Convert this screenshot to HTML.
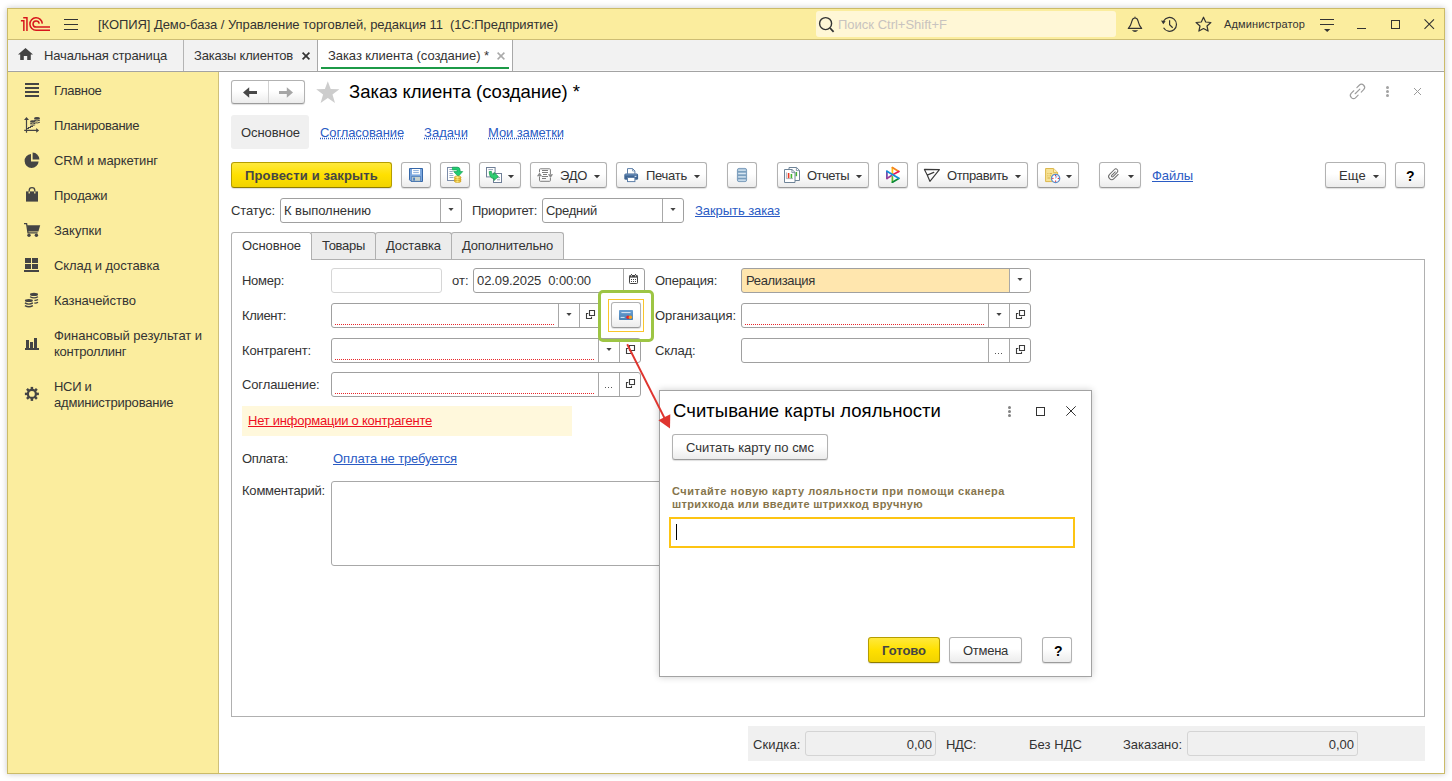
<!DOCTYPE html>
<html lang="ru">
<head>
<meta charset="utf-8">
<title>Заказ клиента (создание)</title>
<style>
*{box-sizing:border-box;margin:0;padding:0}
html,body{width:1452px;height:781px;overflow:hidden;background:#fff}
body{font-family:"Liberation Sans",sans-serif;font-size:13px;color:#333;position:relative}
.abs{position:absolute}
svg{overflow:visible}
.t{position:absolute;white-space:pre;line-height:16px;height:16px}
.btn{position:absolute;border:1px solid #b2b2b2;border-bottom-color:#9b9b9b;border-radius:3px;background:linear-gradient(#ffffff 0%,#ffffff 45%,#ececec 100%);box-shadow:0 1px 1px rgba(0,0,0,.13)}
.ybtn{position:absolute;border:1px solid #b59d00;border-bottom-color:#8f7c00;border-radius:3px;background:linear-gradient(#ffe93c 0%,#ffe000 50%,#f1d300 100%);box-shadow:0 1px 1px rgba(0,0,0,.13)}
.inp{position:absolute;border:1px solid #a0a0a0;border-radius:3px;background:#fff}
.lnk{color:#2a5bc4;text-decoration:underline}
.dlnk{color:#2a5bc4;text-decoration:underline dotted}
.vs{position:absolute;width:1px;background:#a8a8a8}
.rd{position:absolute;height:1px;background:repeating-linear-gradient(90deg,#e8262a 0,#e8262a 1px,transparent 1px,transparent 2px)}

</style>
</head>
<body>
<!-- window frame -->
<div class="abs" style="left:7px;top:8px;width:1438px;height:766px;border:1px solid #cbbb68;background:#fff;box-shadow:0 0 6px rgba(0,0,0,.22)"></div>
<div class="abs" style="left:8px;top:9px;width:1436px;height:30px;background:#fbed9e"></div>
<div class="abs" style="left:8px;top:39px;width:1436px;height:1px;background:#cdbd74"></div>
<div class="abs" style="left:8px;top:40px;width:1436px;height:30px;background:#f2f2f2"></div>
<div class="abs" style="left:8px;top:70px;width:1436px;height:1px;background:#f8f8f8"></div>
<div class="abs" style="left:8px;top:71px;width:1436px;height:1px;background:#a3a3a3"></div>
<div class="abs" style="left:8px;top:72px;width:210px;height:701px;background:#fbed9e"></div>
<div class="abs" style="left:218px;top:72px;width:1px;height:701px;background:#cfc07a"></div>
<!-- title bar -->
<svg class="abs" style="left:0px;top:0px" width="60" height="40" viewBox="0 0 60 40"><g fill="none" stroke="#d7151c" stroke-width="1.5" stroke-linejoin="miter">
<path d="M20.9 20.75 L23.85 20.75 L23.85 31"/>
<path d="M23.2 17.65 L26.95 17.65 L26.95 31"/>
<path d="M42.3 23.6 A6.2 6.2 0 1 0 36.15 30.2 L50 30.2"/>
<path d="M39.2 23.6 A3.1 3.1 0 1 0 36.15 27.1 L50 27.1"/>
</g></svg>
<div class="abs" style="left:64px;top:19px;width:14px;height:1px;background:#333"></div>
<div class="abs" style="left:64px;top:24px;width:14px;height:1px;background:#333"></div>
<div class="abs" style="left:64px;top:29px;width:14px;height:1px;background:#333"></div>
<div class="t" style="top:17px;left:98px;letter-spacing:-0.067px;">[КОПИЯ] Демо-база / Управление торговлей, редакция 11  (1С:Предприятие)</div>
<div class="abs" style="left:816px;top:11px;width:300px;height:26px;background:#fff7d6;border-radius:3px"></div>
<svg class="abs" style="left:818px;top:15.8px" width="18" height="18" viewBox="0 0 18 18"><circle cx="7.6" cy="7.6" r="6" fill="none" stroke="#333" stroke-width="1.4"/><path d="M12 12 L15.6 15.8" stroke="#333" stroke-width="1.8" fill="none"/></svg>
<div class="t" style="top:17px;left:838px;color:#c8c3bf;letter-spacing:0.000px;">Поиск Ctrl+Shift+F</div>
<svg class="abs" style="left:0px;top:0px" width="1" height="1" viewBox="0 0 1 1"><path d="M1128.3 28.4 C1131.4 25.6 1131.4 22.4 1131.9 21 C1132.4 18.8 1133.8 18 1135 18 C1136.2 18 1137.6 18.8 1138.1 21 C1138.6 22.4 1138.6 25.6 1141.7 28.4 Z M1135 17 L1135 18" fill="none" stroke="#333" stroke-width="1.15" stroke-linejoin="round" stroke-linecap="round"/><path d="M1131.8 30.2 L1138.2 30.2 Q1135 33.6 1131.8 30.2 Z" fill="#333"/></svg>
<svg class="abs" style="left:0px;top:0px" width="1" height="1" viewBox="0 0 1 1"><path d="M1163.6 20.95 A6.9 6.9 0 1 1 1163.56 27.75" fill="none" stroke="#333" stroke-width="1.2"/><path d="M1161 20.4 L1165.6 21.2 L1163.3 24.2 Z" fill="#333"/><path d="M1169.6 20.2 L1169.6 24.7 L1172.7 27.7" fill="none" stroke="#333" stroke-width="1.2"/></svg>
<svg class="abs" style="left:1194.6px;top:15.7px" width="17" height="16" viewBox="0 0 17 16"><path d="M8.5 1.2 L10.7 6 L15.9 6.5 L12 10 L13.1 15.1 L8.5 12.5 L3.9 15.1 L5 10 L1.1 6.5 L6.3 6 Z" fill="none" stroke="#333" stroke-width="1.2" stroke-linejoin="round"/></svg>
<div class="t" style="top:16px;left:1224px;font-size:11px;letter-spacing:0.125px;">Администратор</div>
<div class="abs" style="left:1320px;top:19px;width:14px;height:1px;background:#333"></div>
<div class="abs" style="left:1320px;top:24px;width:14px;height:1px;background:#333"></div>
<svg class="abs" style="left:1324px;top:29px" width="6" height="3" viewBox="0 0 6 3"><path d="M0 0 L6.4 0 L3.2 3.1 Z" fill="#333"/></svg>
<div class="abs" style="left:1357px;top:28px;width:9px;height:1px;background:#333"></div>
<div class="abs" style="left:1391px;top:20px;width:9px;height:9px;border:1px solid #333"></div>
<svg class="abs" style="left:1424px;top:19px" width="11" height="11" viewBox="0 0 11 11"><path d="M0.5 0.3 L10 9.8 M10 0.3 L0.5 9.8" stroke="#333" stroke-width="1.1" fill="none"/></svg>
<!-- app tabs -->
<svg class="abs" style="left:18px;top:48px" width="15" height="12" viewBox="0 0 15 12"><path d="M7.5 0 L15 6.6 L12.8 6.6 L12.8 12 L9.2 12 L9.2 8 L5.8 8 L5.8 12 L2.2 12 L2.2 6.6 L0 6.6 Z" fill="#444"/></svg>
<div class="t" style="top:48px;left:44px;letter-spacing:-0.155px;">Начальная страница</div>
<div class="abs" style="left:183px;top:40px;width:1px;height:31px;background:#b4b4b4"></div>
<div class="t" style="top:48px;left:194px;letter-spacing:-0.206px;">Заказы клиентов</div>
<svg class="abs" style="left:302px;top:52px" width="8" height="8" viewBox="0 0 8 8"><path d="M0.6 0.6 L7.4 7.4 M7.4 0.6 L0.6 7.4" stroke="#333" stroke-width="1.7" fill="none"/></svg>
<div class="abs" style="left:317px;top:40px;width:1px;height:31px;background:#a8a8a8"></div>
<div class="abs" style="left:318px;top:40px;width:194px;height:31px;background:#fff"></div>
<div class="t" style="top:48px;left:328px;letter-spacing:-0.064px;">Заказ клиента (создание) *</div>
<svg class="abs" style="left:497px;top:52px" width="8" height="8" viewBox="0 0 8 8"><path d="M0.6 0.6 L7.4 7.4 M7.4 0.6 L0.6 7.4" stroke="#aaa" stroke-width="1.5" fill="none"/></svg>
<div class="abs" style="left:321px;top:67px;width:188px;height:2px;background:#1c9a47"></div>
<div class="abs" style="left:512px;top:40px;width:1px;height:31px;background:#a8a8a8"></div>
<!-- sidebar -->
<div class="abs" style="left:25px;top:83px;width:14px;height:2px;background:#444"></div>
<div class="abs" style="left:25px;top:87px;width:14px;height:2px;background:#444"></div>
<div class="abs" style="left:25px;top:91px;width:14px;height:2px;background:#444"></div>
<div class="abs" style="left:25px;top:95px;width:14px;height:2px;background:#444"></div>
<div class="t" style="top:83px;left:54px;letter-spacing:-0.310px;">Главное</div>
<svg class="abs" style="left:0px;top:0px" width="1" height="1" viewBox="0 0 1 1"><g stroke="#444" fill="none" stroke-width="1.2"><path d="M26.5 119 L26.5 132.8 M24.2 130.4 L37 130.4"/><path d="M27 128.5 L28.5 128.5 L28.5 127.5 L30.5 127.5 L30.5 126.5 L33 126.5" stroke-width="1" shape-rendering="crispEdges"/></g>
<path d="M26.5 116.9 L24 119.9 L29 119.9 Z M39.1 130.4 L36.2 128.1 L36.2 132.7 Z" fill="#444"/>
<g fill="#444"><ellipse cx="37" cy="118.4" rx="3" ry="1.35"/><ellipse cx="32.8" cy="121.4" rx="2.8" ry="1.25"/></g>
<g fill="none" stroke="#444" stroke-width="1"><path d="M34.1 120.2 Q37 121.8 39.9 120.2"/><path d="M35.4 122.8 Q37.6 123.4 39.9 122.2"/><path d="M30.1 123.2 Q32.8 124.8 35.5 123.2"/><path d="M30.4 124.9 Q32.8 126 35.2 124.9" stroke-width="0.8"/></g></svg>
<div class="t" style="top:118px;left:54px;letter-spacing:-0.286px;">Планирование</div>
<svg class="abs" style="left:24px;top:152px" width="16" height="16" viewBox="0 0 16 16"><path d="M7 2 A7 7 0 1 0 14.6 9.4 L7 9.4 Z" fill="#444"/><path d="M8.6 0.6 A7 7 0 0 1 15.4 7.6 L8.6 7.6 Z" fill="#444"/></svg>
<div class="t" style="top:153px;left:54px;letter-spacing:-0.084px;">CRM и маркетинг</div>
<svg class="abs" style="left:25px;top:186px" width="14" height="16" viewBox="0 0 14 16"><path d="M1 5.4 L13 5.4 L13 15.6 L1 15.6 Z" fill="#444"/><path d="M4.2 7.6 L4.2 4.4 A2.8 2.8 0 0 1 9.8 4.4 L9.8 7.6" fill="none" stroke="#444" stroke-width="1.3"/><path d="M4.2 7.6 L4.2 5.4 M9.8 7.6 L9.8 5.4" stroke="#fbed9e" stroke-width="1.3"/><path d="M3.55 7.6 L3.55 5.4 M4.85 7.6 L4.85 5.4 M9.15 7.6 L9.15 5.4 M10.45 7.6 L10.45 5.4" stroke="#444" stroke-width="0" /></svg>
<div class="t" style="top:188px;left:54px;letter-spacing:-0.128px;">Продажи</div>
<svg class="abs" style="left:24px;top:223px" width="17" height="14" viewBox="0 0 17 14"><path d="M0 0.7 L2.6 0.7 L4 9.8 L13.6 9.8" fill="none" stroke="#444" stroke-width="1.3"/><path d="M3 2.2 L16.2 2.2 L14.4 8.6 L4 8.6 Z" fill="#444"/><circle cx="5" cy="12.2" r="1.7" fill="#444"/><circle cx="12.4" cy="12.2" r="1.7" fill="#444"/></svg>
<div class="t" style="top:223px;left:54px;letter-spacing:-0.001px;">Закупки</div>
<div class="abs" style="left:25px;top:258px;width:6px;height:5px;background:#444"></div>
<div class="abs" style="left:32px;top:258px;width:6px;height:5px;background:#444"></div>
<div class="abs" style="left:25px;top:264px;width:6px;height:5px;background:#444"></div>
<div class="abs" style="left:32px;top:264px;width:6px;height:5px;background:#444"></div>
<div class="abs" style="left:24px;top:270px;width:15px;height:2px;background:#444"></div>
<div class="t" style="top:258px;left:54px;letter-spacing:-0.067px;">Склад и доставка</div>
<svg class="abs" style="left:24px;top:292px" width="15" height="16" viewBox="0 0 15 16"><g fill="#444"><ellipse cx="10" cy="2.4" rx="4" ry="1.55"/><ellipse cx="4.9" cy="8.5" rx="4" ry="1.5"/></g>
<g fill="none" stroke="#444" stroke-width="1.3"><path d="M6 4.7 Q10 7 14 4.7"/><path d="M10.4 8.3 Q12.6 8.5 14 7.5"/><path d="M10.4 11 Q12.6 11.2 14 10.2"/><path d="M0.9 10.9 Q4.9 13.2 8.9 10.9"/><path d="M0.9 13.6 Q4.9 15.9 8.9 13.6"/></g></svg>
<div class="t" style="top:293px;left:54px;letter-spacing:-0.054px;">Казначейство</div>
<div class="abs" style="left:26px;top:340px;width:3px;height:9px;background:#444"></div>
<div class="abs" style="left:30px;top:342px;width:3px;height:7px;background:#444"></div>
<div class="abs" style="left:34px;top:338px;width:3px;height:11px;background:#444"></div>
<div class="abs" style="left:25px;top:348px;width:14px;height:1.5px;background:#444"></div>
<div class="t" style="top:328px;left:54px;letter-spacing:-0.039px;">Финансовый результат и</div>
<div class="t" style="top:344px;left:54px;letter-spacing:-0.221px;">контроллинг</div>
<svg class="abs" style="left:24px;top:386px" width="16" height="16" viewBox="0 0 16 16"><g transform="translate(7.9 7.9)"><circle r="4" fill="none" stroke="#444" stroke-width="2.2"/><g fill="#444"><rect x="-1.25" y="-7" width="2.5" height="3" transform="rotate(0)"/><rect x="-1.25" y="-7" width="2.5" height="3" transform="rotate(45)"/><rect x="-1.25" y="-7" width="2.5" height="3" transform="rotate(90)"/><rect x="-1.25" y="-7" width="2.5" height="3" transform="rotate(135)"/><rect x="-1.25" y="-7" width="2.5" height="3" transform="rotate(180)"/><rect x="-1.25" y="-7" width="2.5" height="3" transform="rotate(225)"/><rect x="-1.25" y="-7" width="2.5" height="3" transform="rotate(270)"/><rect x="-1.25" y="-7" width="2.5" height="3" transform="rotate(315)"/></g></g></svg>
<div class="t" style="top:379px;left:54px;letter-spacing:-0.300px;">НСИ и</div>
<div class="t" style="top:395px;left:54px;letter-spacing:-0.184px;">администрирование</div>
<!-- main form header -->
<div class="btn" style="left:231px;top:80px;width:74px;height:24px;"></div>
<div class="abs" style="left:268px;top:81px;width:1px;height:22px;background:#d2d2d2"></div>
<svg class="abs" style="left:243px;top:87px" width="14" height="11" viewBox="0 0 14 11"><path d="M0 5.5 L6.2 0.2 L6.2 3.9 L14 3.9 L14 7.1 L6.2 7.1 L6.2 10.8 Z" fill="#484848"/></svg>
<svg class="abs" style="left:279px;top:87px" width="14" height="11" viewBox="0 0 14 11"><path d="M14 5.5 L7.8 0.2 L7.8 3.9 L0 3.9 L0 7.1 L7.8 7.1 L7.8 10.8 Z" fill="#a6a6a6"/></svg>
<svg class="abs" style="left:315.6px;top:81px" width="24" height="22" viewBox="0 0 24 22"><path d="M11.8 0.2 L14.7 8 L23.4 8.3 L16.5 13.6 L19 21.9 L11.8 17 L4.6 21.9 L7.1 13.6 L0.2 8.3 L8.9 8 Z" fill="#cdcdcd"/></svg>
<div class="t" style="top:80px;left:349px;font-size:18.5px;line-height:24px;height:24px;color:#000;letter-spacing:-0.019px;">Заказ клиента (создание) *</div>
<svg class="abs" style="left:0px;top:0px" width="1" height="1" viewBox="0 0 1 1"><g transform="translate(1357.5 91.4) rotate(-45)" fill="none" stroke="#9c9c9c" stroke-width="1.15" stroke-linecap="round"><path d="M2.2 -3.1 L5.6 -3.1 A3.1 3.1 0 0 1 5.6 3.1 L2.2 3.1"/><path d="M-2.2 3.1 L-5.6 3.1 A3.1 3.1 0 0 1 -5.6 -3.1 L-2.2 -3.1"/><path d="M-3.3 0 L3.3 0"/></g></svg>
<div class="abs" style="left:1386px;top:86px;width:3px;height:3px;background:#a2a2a2;border-radius:50%"></div>
<div class="abs" style="left:1386px;top:90px;width:3px;height:3px;background:#a2a2a2;border-radius:50%"></div>
<div class="abs" style="left:1386px;top:94px;width:3px;height:3px;background:#a2a2a2;border-radius:50%"></div>
<svg class="abs" style="left:1414px;top:88px" width="7" height="7" viewBox="0 0 7 7"><path d="M0 0 L7 7 M7 0 L0 7" stroke="#9a9a9a" stroke-width="1" fill="none"/></svg>
<div class="abs" style="left:231px;top:115px;width:78px;height:34px;background:#f0f0f0;border-radius:3px"></div>
<div class="t" style="top:125px;left:241px;letter-spacing:-0.072px;">Основное</div>
<div class="t dlnk" style="top:125px;left:320px;letter-spacing:-0.120px;">Согласование</div>
<div class="t dlnk" style="top:125px;left:424px;letter-spacing:0.057px;">Задачи</div>
<div class="t dlnk" style="top:125px;left:488px;letter-spacing:-0.084px;">Мои заметки</div>
<!-- toolbar -->
<div class="ybtn" style="left:231px;top:162px;width:161px;height:26px;"></div>
<div class="t" style="top:168px;left:245px;font-weight:700;color:#454545;letter-spacing:0.148px;">Провести и закрыть</div>
<div class="btn" style="left:401px;top:162px;width:30px;height:26px;"></div>
<svg class="abs" style="left:409px;top:168px" width="14" height="14" viewBox="0 0 14 14"><path d="M0.5 0.5 L13.5 0.5 L13.5 13.5 L2.2 13.5 L0.5 11.8 Z" fill="#7ba7de" stroke="#3567a8" stroke-width="1"/><rect x="3" y="1" width="8" height="5.4" fill="#fff"/><path d="M4.2 2.6 L9.8 2.6 M4.2 4.6 L9.8 4.6" stroke="#7fa6d6" stroke-width="0.9"/><rect x="2.8" y="8.6" width="8.6" height="4.6" fill="#c8d2cc" stroke="#4a79b3" stroke-width="0.7"/><rect x="4.2" y="9.6" width="1.7" height="3" fill="#3f78c0"/></svg>
<div class="btn" style="left:440px;top:162px;width:30px;height:26px;"></div>
<svg class="abs" style="left:0px;top:0px" width="1" height="1" viewBox="0 0 1 1"><defs><linearGradient id="gc" x1="0" y1="0" x2="1" y2="0"><stop offset="0" stop-color="#e6b21c"/><stop offset="0.45" stop-color="#fff38a"/><stop offset="1" stop-color="#e2ac18"/></linearGradient></defs>
<rect x="447.5" y="167.5" width="10.6" height="13" fill="#fff" stroke="#7c8ca8" stroke-width="1"/><path d="M449.4 169.5 H452.4 M449.4 171.5 H452.8 M449.4 173.5 H452.8 M449.4 175.5 H453.4 M449.4 177.5 H453.4" stroke="#8fa2c0" stroke-width="0.9"/>
<path d="M452.4 167.2 H457.4 Q460.1 167.2 460.1 170 V171.6 H462.7 L458.2 176.5 L453.7 171.6 H457.1 V170.5 Q457.1 169.9 456.5 169.9 H452.4 Z" fill="#22cc72" stroke="#10a050" stroke-width="0.7" stroke-linejoin="round"/>
<g fill="url(#gc)" stroke="#c9981a" stroke-width="0.6"><ellipse cx="457.7" cy="181" rx="3.4" ry="1.5"/><ellipse cx="457.7" cy="179.2" rx="3.4" ry="1.5"/><ellipse cx="457.7" cy="177.4" rx="3.4" ry="1.5"/></g></svg>
<div class="btn" style="left:479px;top:162px;width:42px;height:26px;"></div>
<svg class="abs" style="left:486px;top:167px" width="16" height="16" viewBox="0 0 16 16"><rect x="0.5" y="0.5" width="8.6" height="9.4" fill="#fff" stroke="#6f7f97" stroke-width="1"/><path d="M2.4 2.6 L7 2.6" stroke="#8a9ab0" stroke-width="0.9"/>
<rect x="7.5" y="6.5" width="8" height="9" fill="#fff" stroke="#6f7f97" stroke-width="1"/><path d="M11 10.6 L14 10.6 M11 12.8 L14 12.8" stroke="#8a9ab0" stroke-width="0.9"/>
<path d="M3.2 4.6 L5.4 4.4 Q5.2 7.6 8 7.4 L8 5.4 L12.4 9.6 L8 13.4 L8 11.4 Q3.4 11.8 3.2 4.6 Z" fill="#2ecc71" stroke="#1e9e50" stroke-width="0.8"/></svg>
<svg class="abs" style="left:507px;top:175px" width="8" height="4" viewBox="0 0 8 4"><path d="M0.9 0 L7.1 0 L4 3.3 Z" fill="#3a3a3a"/></svg>
<div class="btn" style="left:530px;top:162px;width:77px;height:26px;"></div>
<svg class="abs" style="left:0px;top:0px" width="1" height="1" viewBox="0 0 1 1"><g fill="none" stroke="#7d7d7d" stroke-width="1"><path d="M539.5 172.2 V169.6 Q539.5 168.8 540.3 168.8 H549.6 Q550.4 168.8 550.4 169.6 V174.2"/><path d="M550.4 178 V180.5 Q550.4 181.3 549.6 181.3 H540.3 Q539.5 181.3 539.5 180.5 V176.4"/><path d="M542 170.5 H548 M542 172.5 H548 M543 174.5 H547 M542 176.5 H548 M542 178.5 H546" stroke-width="1" shape-rendering="crispEdges"/></g><path d="M539.5 172.4 L536.9 176.2 L542.1 176.2 Z M550.5 178 L547.9 174.2 L553.1 174.2 Z" fill="#8a8a8a"/></svg>
<div class="t" style="top:168px;left:560px;letter-spacing:-0.276px;">ЭДО</div>
<svg class="abs" style="left:593px;top:175px" width="8" height="4" viewBox="0 0 8 4"><path d="M0.9 0 L7.1 0 L4 3.3 Z" fill="#3a3a3a"/></svg>
<div class="btn" style="left:616px;top:162px;width:91px;height:26px;"></div>
<svg class="abs" style="left:624px;top:168px" width="15" height="14" viewBox="0 0 15 14"><path d="M3.5 5.8 V0.6 H8.6 L10.9 2.9 V5.8" fill="#fff" stroke="#5d7fa8" stroke-width="1"/><path d="M8.5 0.7 V3 H10.8" fill="none" stroke="#5d7fa8" stroke-width="0.7"/><rect x="0.3" y="5.6" width="13.8" height="6.2" rx="1.5" fill="#3f6593"/><rect x="1.2" y="6.3" width="12" height="1.1" fill="#6f93bd"/><rect x="3.5" y="9.5" width="7.4" height="4.1" fill="#fff" stroke="#5d7fa8" stroke-width="1"/><rect x="10.6" y="7.9" width="1.8" height="1" fill="#dbe8f8"/></svg>
<div class="t" style="top:168px;left:646px;letter-spacing:-0.266px;">Печать</div>
<svg class="abs" style="left:693px;top:175px" width="8" height="4" viewBox="0 0 8 4"><path d="M0.9 0 L7.1 0 L4 3.3 Z" fill="#3a3a3a"/></svg>
<div class="btn" style="left:727px;top:162px;width:30px;height:26px;"></div>
<svg class="abs" style="left:737px;top:168px" width="10" height="14" viewBox="0 0 10 14"><rect x="0.4" y="0.4" width="9.2" height="13.2" rx="1.6" fill="#8eb0cd" stroke="#6b90b2" stroke-width="0.8"/><path d="M1.2 2.1 L8.8 2.1 M1.2 5.5 L8.8 5.5 M1.2 8.9 L8.8 8.9 M1.2 12.2 L8.8 12.2" stroke="#d9e7f2" stroke-width="1.3"/><path d="M0.8 3.8 L9.2 3.8 M0.8 7.2 L9.2 7.2 M0.8 10.6 L9.2 10.6" stroke="#6b90b2" stroke-width="0.7"/></svg>
<div class="btn" style="left:777px;top:162px;width:92px;height:26px;"></div>
<svg class="abs" style="left:784px;top:167px" width="16" height="16" viewBox="0 0 16 16"><path d="M5 0.5 L12.6 0.5 L15.5 3.4 L15.5 13.5 L5 13.5 Z" fill="#fff" stroke="#6f8498" stroke-width="1"/><path d="M12.4 0.6 L12.4 3.6 L15.4 3.6" fill="none" stroke="#6f8498" stroke-width="0.8"/><rect x="11.6" y="5" width="1.5" height="4.2" fill="#45b535"/>
<path d="M0.5 2.5 L8 2.5 L11 5.4 L11 15.5 L0.5 15.5 Z" fill="#fff" stroke="#6f8498" stroke-width="1"/><path d="M7.9 2.6 L7.9 5.6 L10.9 5.6" fill="none" stroke="#6f8498" stroke-width="0.8"/>
<path d="M2.4 5.4 L2.4 11.6 L9 11.6" fill="none" stroke="#8e99a4" stroke-width="0.7"/><rect x="3.8" y="6" width="1.6" height="5.2" fill="#ea3a24"/><rect x="6.6" y="7" width="1.6" height="4.2" fill="#45b535"/></svg>
<div class="t" style="top:168px;left:807px;letter-spacing:-0.490px;">Отчеты</div>
<svg class="abs" style="left:855px;top:175px" width="8" height="4" viewBox="0 0 8 4"><path d="M0.9 0 L7.1 0 L4 3.3 Z" fill="#3a3a3a"/></svg>
<div class="btn" style="left:878px;top:162px;width:30px;height:26px;"></div>
<svg class="abs" style="left:0px;top:0px" width="1" height="1" viewBox="0 0 1 1"><g fill="none" stroke-width="1.7" stroke-linecap="round" stroke-linejoin="round">
<path d="M892.4 167.6 L892.4 174" stroke="#ffc20e"/><path d="M892.4 167.6 L898.8 171.5" stroke="#f58220"/><path d="M898.8 171.5 L893.6 174.3" stroke="#e5195a"/>
<path d="M886.9 171.4 L886.9 178.4" stroke="#6a46a8"/><path d="M886.9 178.4 L891.6 175.6" stroke="#a23c96"/>
<path d="M892.4 176.8 L892.4 182.2" stroke="#5dbe2a"/><path d="M892.4 182.2 L898.8 178.4" stroke="#0b8a3a"/>
<path d="M886.9 171.2 L898.8 178.3" stroke="#0e8fd8"/></g></svg>
<div class="btn" style="left:917px;top:162px;width:111px;height:26px;"></div>
<svg class="abs" style="left:0px;top:0px" width="1" height="1" viewBox="0 0 1 1"><path d="M924.4 169.4 L939.4 169.6 L929.9 181.3 L927.2 175.1 Z M927.2 175.1 L933.8 172.4" fill="none" stroke="#3a3a3a" stroke-width="1.15" stroke-linejoin="round" stroke-linecap="round"/></svg>
<div class="t" style="top:168px;left:947px;letter-spacing:-0.385px;">Отправить</div>
<svg class="abs" style="left:1014px;top:175px" width="8" height="4" viewBox="0 0 8 4"><path d="M0.9 0 L7.1 0 L4 3.3 Z" fill="#3a3a3a"/></svg>
<div class="btn" style="left:1037px;top:162px;width:42px;height:26px;"></div>
<svg class="abs" style="left:1045px;top:168px" width="16" height="15" viewBox="0 0 16 15"><path d="M0.6 0.5 L8.6 0.5 L12.6 4.4 L12.6 13.6 L0.6 13.6 Z" fill="#f7e294" stroke="#dcb84c" stroke-width="1"/><path d="M8.5 0.6 L8.5 4.5 L12.5 4.5" fill="#fbeeb8" stroke="#dcb84c" stroke-width="0.8"/><path d="M2.4 5.6 L3.4 5.6 M4.6 5.6 L7 5.6 M2.4 7.8 L3.4 7.8 M4.6 7.8 L6 7.8 M2.4 10 L5 10" stroke="#d3ab3c" stroke-width="0.9"/>
<circle cx="10.6" cy="10.4" r="4.1" fill="#fff" stroke="#5b8dc9" stroke-width="1.3"/><g fill="#e8202a"><rect x="10.1" y="7" width="1" height="1.3"/><rect x="10.1" y="12.5" width="1" height="1.3"/><rect x="7.2" y="9.9" width="1.3" height="1"/><rect x="12.7" y="9.9" width="1.3" height="1"/></g><path d="M10.6 10.4 L12.2 8.2 L10.8 8.4 Z" fill="#8fa6e0" stroke="#8fa6e0" stroke-width="0.5"/></svg>
<svg class="abs" style="left:1065px;top:175px" width="8" height="4" viewBox="0 0 8 4"><path d="M0.9 0 L7.1 0 L4 3.3 Z" fill="#3a3a3a"/></svg>
<div class="btn" style="left:1099px;top:162px;width:42px;height:26px;"></div>
<svg class="abs" style="left:1107px;top:167px" width="15" height="15" viewBox="0 0 15 15"><g transform="translate(6.9 7.4) rotate(45)"><path d="M3.1 -3 L3.1 3 A3.1 3.1 0 0 1 -3.1 3 L-3.1 -3.8 A2 2 0 0 1 0.9 -3.8 L0.9 2.2 A0.9 0.9 0 0 1 -0.9 2.2 L-0.9 -2.8" fill="none" stroke="#6c6c6c" stroke-width="1" stroke-linecap="round"/></g></svg>
<svg class="abs" style="left:1127px;top:175px" width="8" height="4" viewBox="0 0 8 4"><path d="M0.9 0 L7.1 0 L4 3.3 Z" fill="#3a3a3a"/></svg>
<div class="t lnk" style="top:168px;left:1152px;letter-spacing:-0.062px;">Файлы</div>
<div class="btn" style="left:1325px;top:162px;width:61px;height:26px;"></div>
<div class="t" style="top:168px;left:1339px;letter-spacing:0.182px;">Еще</div>
<svg class="abs" style="left:1372px;top:175px" width="8" height="4" viewBox="0 0 8 4"><path d="M0.9 0 L7.1 0 L4 3.3 Z" fill="#3a3a3a"/></svg>
<div class="btn" style="left:1395px;top:162px;width:30px;height:26px;"></div>
<div class="t" style="top:168px;left:1406px;font-size:14px;font-weight:700;color:#000;">?</div>
<!-- status row -->
<div class="t" style="top:203px;left:231px;letter-spacing:-0.103px;">Статус:</div>
<div class="inp" style="left:280px;top:198px;width:182px;height:25px;"></div>
<div class="vs" style="left:440px;top:199px;width:1px;height:23px;"></div>
<svg class="abs" style="left:448px;top:208px" width="6" height="3" viewBox="0 0 6 3"><path d="M0.4 0 L5.6 0 L3 3 Z" fill="#444"/></svg>
<div class="t" style="top:203px;left:284px;letter-spacing:-0.051px;">К выполнению</div>
<div class="t" style="top:203px;left:472px;letter-spacing:-0.273px;">Приоритет:</div>
<div class="inp" style="left:542px;top:198px;width:142px;height:25px;"></div>
<div class="vs" style="left:662px;top:199px;width:1px;height:23px;"></div>
<svg class="abs" style="left:670px;top:208px" width="6" height="3" viewBox="0 0 6 3"><path d="M0.4 0 L5.6 0 L3 3 Z" fill="#444"/></svg>
<div class="t" style="top:203px;left:546px;letter-spacing:-0.266px;">Средний</div>
<div class="t lnk" style="top:203px;left:695px;letter-spacing:-0.069px;">Закрыть заказ</div>
<!-- form tabs + panel -->
<div class="abs" style="left:231px;top:259px;width:1194px;height:458px;border:1px solid #b0b0b0;background:#fff"></div>
<div class="abs" style="left:311px;top:232px;width:65px;height:27px;border:1px solid #b0b0b0;border-bottom:none;border-radius:3px 3px 0 0;background:#ececec;border-left:none;border-radius:0 3px 0 0"></div>
<div class="abs" style="left:375px;top:232px;width:77px;height:27px;border:1px solid #b0b0b0;border-bottom:none;border-radius:3px 3px 0 0;background:#ececec;border-radius:3px 3px 0 0"></div>
<div class="abs" style="left:451px;top:232px;width:113px;height:27px;border:1px solid #b0b0b0;border-bottom:none;border-radius:3px 3px 0 0;background:#ececec;border-radius:3px 3px 0 0"></div>
<div class="abs" style="left:231px;top:232px;width:81px;height:28px;border:1px solid #b0b0b0;border-bottom:none;border-radius:3px 3px 0 0;background:#fff"></div>
<div class="t" style="top:238px;left:242px;letter-spacing:-0.072px;">Основное</div>
<div class="t" style="top:238px;left:322px;letter-spacing:-0.289px;">Товары</div>
<div class="t" style="top:238px;left:386px;letter-spacing:-0.104px;">Доставка</div>
<div class="t" style="top:238px;left:462px;letter-spacing:-0.198px;">Дополнительно</div>
<!-- form fields -->
<div class="t" style="top:273px;left:242px;letter-spacing:-0.273px;">Номер:</div>
<div class="inp" style="left:331px;top:268px;width:111px;height:25px;border-color:#d6d6d6"></div>
<div class="t" style="top:273px;left:452px;">от:</div>
<div class="inp" style="left:473px;top:268px;width:172px;height:25px;"></div>
<div class="vs" style="left:623px;top:269px;width:1px;height:23px;"></div>
<div class="t" style="top:273px;left:477px;letter-spacing:-0.088px;">02.09.2025  0:00:00</div>
<svg class="abs" style="left:629px;top:274px" width="9" height="10" viewBox="0 0 9 10"><rect x="0.5" y="1.5" width="8" height="8" rx="0.8" fill="#fff" stroke="#444" stroke-width="1"/><rect x="0.5" y="1.5" width="8" height="2.1" fill="#444"/><rect x="2" y="0" width="1" height="1.4" fill="#444"/><rect x="6" y="0" width="1" height="1.4" fill="#444"/><rect x="2" y="1.3" width="1" height="1" fill="#fff"/><rect x="6" y="1.3" width="1" height="1" fill="#fff"/><g fill="#444"><rect x="2" y="5" width="1" height="1"/><rect x="4" y="5" width="1" height="1"/><rect x="6" y="5" width="1" height="1"/><rect x="2" y="7" width="1" height="1"/><rect x="4" y="7" width="1" height="1"/><rect x="6" y="7" width="1" height="1"/></g></svg>
<div class="t" style="top:273px;left:655px;letter-spacing:-0.245px;">Операция:</div>
<div class="inp" style="left:741px;top:268px;width:290px;height:25px;background:#ffe6ae"></div>
<div class="abs" style="left:1009px;top:269px;width:21px;height:23px;background:#fff;border-left:1px solid #a8a8a8;border-radius:0 2px 2px 0"></div>
<svg class="abs" style="left:1017px;top:278px" width="6" height="3" viewBox="0 0 6 3"><path d="M0.4 0 L5.6 0 L3 3 Z" fill="#444"/></svg>
<div class="t" style="top:273px;left:746px;letter-spacing:-0.336px;">Реализация</div>
<div class="t" style="top:308px;left:242px;letter-spacing:-0.344px;">Клиент:</div>
<div class="inp" style="left:331px;top:303px;width:270px;height:25px;"></div>
<div class="vs" style="left:558px;top:304px;width:1px;height:23px;"></div>
<div class="vs" style="left:579px;top:304px;width:1px;height:23px;"></div>
<svg class="abs" style="left:566px;top:313px" width="6" height="3" viewBox="0 0 6 3"><path d="M0.4 0 L5.6 0 L3 3 Z" fill="#444"/></svg>
<svg class="abs" style="left:586px;top:310px" width="9" height="9" viewBox="0 0 9 9"><g fill="none" stroke="#3c3c3c" stroke-width="1.1"><path d="M3.5 0.5 H8.5 V5.5 H3.5 Z"/><path d="M2.3 3.5 H0.5 V8.5 H5.5 V6.7"/></g></svg>
<div class="rd" style="left:335px;top:324px;width:219px;height:1px;"></div>
<div class="t" style="top:308px;left:655px;letter-spacing:-0.086px;">Организация:</div>
<div class="inp" style="left:741px;top:303px;width:290px;height:25px;"></div>
<div class="vs" style="left:988px;top:304px;width:1px;height:23px;"></div>
<div class="vs" style="left:1009px;top:304px;width:1px;height:23px;"></div>
<svg class="abs" style="left:996px;top:313px" width="6" height="3" viewBox="0 0 6 3"><path d="M0.4 0 L5.6 0 L3 3 Z" fill="#444"/></svg>
<svg class="abs" style="left:1016px;top:310px" width="9" height="9" viewBox="0 0 9 9"><g fill="none" stroke="#3c3c3c" stroke-width="1.1"><path d="M3.5 0.5 H8.5 V5.5 H3.5 Z"/><path d="M2.3 3.5 H0.5 V8.5 H5.5 V6.7"/></g></svg>
<div class="rd" style="left:745px;top:324px;width:240px;height:1px;"></div>
<div class="t" style="top:343px;left:242px;letter-spacing:-0.166px;">Контрагент:</div>
<div class="inp" style="left:331px;top:338px;width:310px;height:25px;"></div>
<div class="vs" style="left:598px;top:339px;width:1px;height:23px;"></div>
<div class="vs" style="left:619px;top:339px;width:1px;height:23px;"></div>
<svg class="abs" style="left:606px;top:348px" width="6" height="3" viewBox="0 0 6 3"><path d="M0.4 0 L5.6 0 L3 3 Z" fill="#444"/></svg>
<svg class="abs" style="left:626px;top:345px" width="9" height="9" viewBox="0 0 9 9"><g fill="none" stroke="#3c3c3c" stroke-width="1.1"><path d="M3.5 0.5 H8.5 V5.5 H3.5 Z"/><path d="M2.3 3.5 H0.5 V8.5 H5.5 V6.7"/></g></svg>
<div class="rd" style="left:335px;top:359px;width:259px;height:1px;"></div>
<div class="t" style="top:343px;left:655px;letter-spacing:-0.122px;">Склад:</div>
<div class="inp" style="left:741px;top:338px;width:290px;height:25px;"></div>
<div class="vs" style="left:988px;top:339px;width:1px;height:23px;"></div>
<div class="vs" style="left:1009px;top:339px;width:1px;height:23px;"></div>
<div class="abs" style="left:995.0px;top:353px;width:1px;height:1px;background:#555"></div>
<div class="abs" style="left:998.0px;top:353px;width:1px;height:1px;background:#555"></div>
<div class="abs" style="left:1001.0px;top:353px;width:1px;height:1px;background:#555"></div>
<svg class="abs" style="left:1016px;top:345px" width="9" height="9" viewBox="0 0 9 9"><g fill="none" stroke="#3c3c3c" stroke-width="1.1"><path d="M3.5 0.5 H8.5 V5.5 H3.5 Z"/><path d="M2.3 3.5 H0.5 V8.5 H5.5 V6.7"/></g></svg>
<div class="t" style="top:377px;left:242px;letter-spacing:-0.122px;">Соглашение:</div>
<div class="inp" style="left:331px;top:372px;width:310px;height:25px;"></div>
<div class="vs" style="left:598px;top:373px;width:1px;height:23px;"></div>
<div class="vs" style="left:619px;top:373px;width:1px;height:23px;"></div>
<div class="abs" style="left:605.0px;top:387px;width:1px;height:1px;background:#555"></div>
<div class="abs" style="left:608.0px;top:387px;width:1px;height:1px;background:#555"></div>
<div class="abs" style="left:611.0px;top:387px;width:1px;height:1px;background:#555"></div>
<svg class="abs" style="left:626px;top:379px" width="9" height="9" viewBox="0 0 9 9"><g fill="none" stroke="#3c3c3c" stroke-width="1.1"><path d="M3.5 0.5 H8.5 V5.5 H3.5 Z"/><path d="M2.3 3.5 H0.5 V8.5 H5.5 V6.7"/></g></svg>
<div class="rd" style="left:335px;top:393px;width:259px;height:1px;"></div>
<div class="abs" style="left:242px;top:406px;width:330px;height:30px;background:#fff8dc"></div>
<div class="t" style="top:413px;left:248px;color:#ee0f1e;letter-spacing:-0.232px;text-decoration:underline;">Нет информации о контрагенте</div>
<div class="t" style="top:451px;left:242px;letter-spacing:-0.335px;">Оплата:</div>
<div class="t lnk" style="top:451px;left:333px;letter-spacing:-0.120px;">Оплата не требуется</div>
<div class="t" style="top:483px;left:242px;letter-spacing:-0.208px;">Комментарий:</div>
<div class="inp" style="left:331px;top:481px;width:700px;height:85px;border-color:#a8a8a8"></div>
<!-- loyalty card button + annotation -->
<div class="abs" style="left:598px;top:290px;width:56px;height:52px;border:3px solid #9dc544;border-radius:5px"></div>
<div class="abs" style="left:608px;top:299px;width:36px;height:33px;border:1px solid #f9c52c"></div>
<div class="btn" style="left:611px;top:302px;width:30px;height:26px;"></div>
<svg class="abs" style="left:619px;top:310px" width="14" height="10" viewBox="0 0 14 10"><defs><linearGradient id="cg" x1="0" y1="0" x2="0" y2="1"><stop offset="0" stop-color="#6aa0d2"/><stop offset="1" stop-color="#477fb4"/></linearGradient></defs><rect x="0" y="0" width="14" height="10" rx="0.8" fill="url(#cg)"/><path d="M2.4 2.6 L11.6 2.6" stroke="#dbe8f5" stroke-width="1"/><path d="M1.6 7.4 L5.6 7.4" stroke="#dbe8f5" stroke-width="1"/><circle cx="9" cy="7.3" r="1.7" fill="#e5202a"/><circle cx="11.4" cy="7.3" r="1.7" fill="#f5a01e"/></svg>
<!-- footer totals -->
<div class="abs" style="left:748px;top:726px;width:677px;height:35px;background:#f0f0f0"></div>
<div class="t" style="top:737px;left:753px;letter-spacing:0.107px;">Скидка:</div>
<div class="inp" style="left:805px;top:731px;width:131px;height:25px;border-color:#d4d4d4;background:#f0f0f0"></div>
<div class="t" style="top:737px;right:520px;">0,00</div>
<div class="t" style="top:737px;left:946px;letter-spacing:-0.301px;">НДС:</div>
<div class="t" style="top:737px;left:1029px;letter-spacing:0.051px;">Без НДС</div>
<div class="t" style="top:737px;left:1123px;letter-spacing:-0.040px;">Заказано:</div>
<div class="inp" style="left:1187px;top:731px;width:171px;height:25px;border-color:#d4d4d4;background:#f0f0f0"></div>
<div class="t" style="top:737px;right:98px;">0,00</div>
<!-- dialog -->
<div class="abs" style="left:659px;top:390px;width:433px;height:287px;background:#fff;border:1px solid #a3a3a3;box-shadow:0 0 7px rgba(0,0,0,.2)"></div>
<div class="t" style="top:399px;left:673px;font-size:18.5px;line-height:24px;height:24px;color:#000;letter-spacing:0.049px;">Считывание карты лояльности</div>
<div class="abs" style="left:1008px;top:406px;width:3px;height:3px;background:#828282;border-radius:50%"></div>
<div class="abs" style="left:1008px;top:410px;width:3px;height:3px;background:#828282;border-radius:50%"></div>
<div class="abs" style="left:1008px;top:414px;width:3px;height:3px;background:#828282;border-radius:50%"></div>
<div class="abs" style="left:1036px;top:407px;width:9px;height:9px;border:1px solid #333"></div>
<svg class="abs" style="left:1066px;top:406px" width="10" height="10" viewBox="0 0 10 10"><path d="M0.3 0.3 L9.7 9.7 M9.7 0.3 L0.3 9.7" stroke="#333" stroke-width="1" fill="none"/></svg>
<div class="btn" style="left:672px;top:434px;width:156px;height:26px;"></div>
<div class="t" style="top:440px;left:686px;letter-spacing:-0.027px;">Считать карту по смс</div>
<div class="t" style="top:483px;left:672px;font-size:11px;font-weight:700;color:#86754c;letter-spacing:0.522px;">Считайте новую карту лояльности при помощи сканера</div>
<div class="t" style="top:496px;left:672px;font-size:11px;font-weight:700;color:#86754c;letter-spacing:0.349px;">штрихкода или введите штрихкод вручную</div>
<div class="abs" style="left:669px;top:517px;width:406px;height:31px;border:2px solid #fdc413;background:#fff"></div>
<div class="abs" style="left:676px;top:524px;width:1px;height:16px;background:#000"></div>
<div class="ybtn" style="left:868px;top:637px;width:72px;height:26px;"></div>
<div class="t" style="top:643px;left:882px;font-weight:700;color:#454545;letter-spacing:-0.042px;">Готово</div>
<div class="btn" style="left:949px;top:637px;width:73px;height:26px;"></div>
<div class="t" style="top:643px;left:963px;letter-spacing:-0.276px;">Отмена</div>
<div class="btn" style="left:1042px;top:637px;width:30px;height:26px;"></div>
<div class="t" style="top:643px;left:1054px;font-size:14px;font-weight:700;color:#000;">?</div>
<!-- red annotation arrow -->
<svg class="abs" style="left:0px;top:0px" width="1452" height="781" viewBox="0 0 1452 781"><path d="M627.2 344.2 L665.4 419.8" stroke="#df352f" stroke-width="1.9" fill="none"/><path d="M670 428.6 L658.4 420.2 L670.3 414.2 Z" fill="#df352f"/></svg>
</body>
</html>
